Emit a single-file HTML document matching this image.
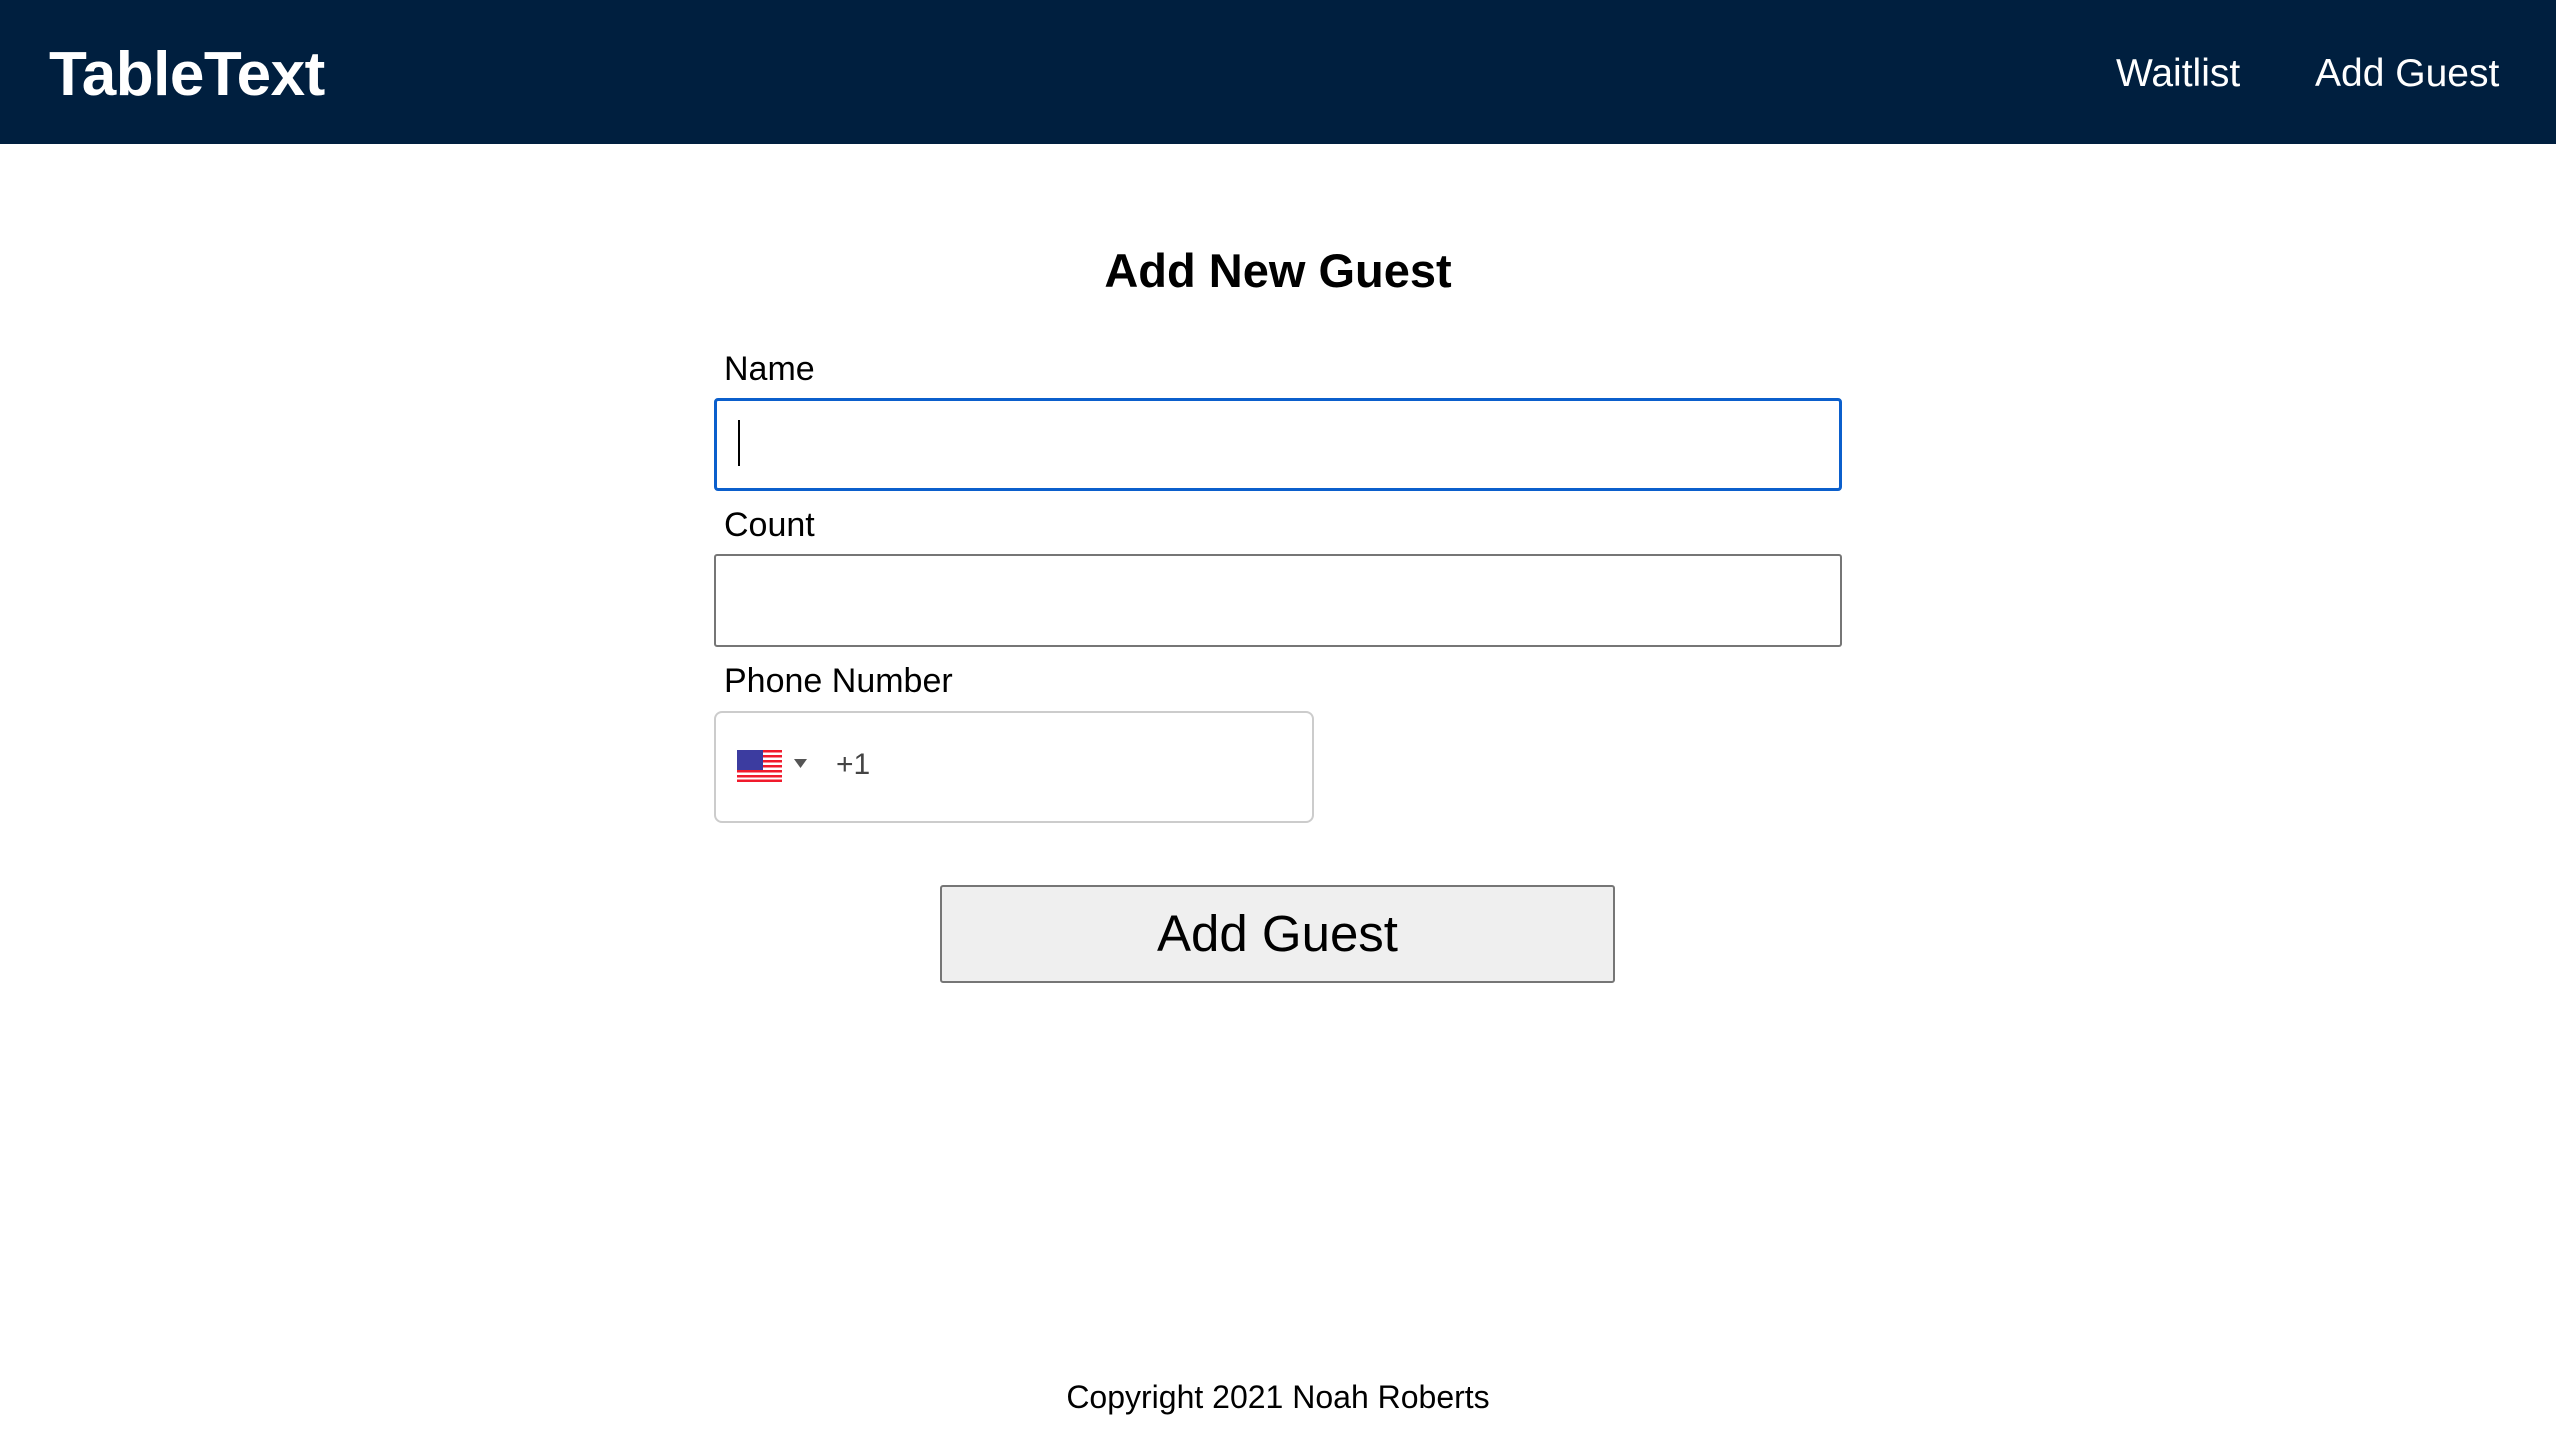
<!DOCTYPE html>
<html><head><meta charset="utf-8"><style>
*{margin:0;padding:0;box-sizing:border-box}
body{width:2556px;height:1438px;background:#fff;font-family:"Liberation Sans",sans-serif;position:relative;overflow:hidden;color:#000}
.hdr{position:absolute;left:0;top:0;width:2556px;height:144px;background:#001f3f}
.logo{position:absolute;left:49px;top:40px;font-size:62px;font-weight:bold;color:#fff;letter-spacing:-0.5px;line-height:70px}
.nav{position:absolute;top:52px;font-size:39px;color:#fff;line-height:44px}
.a{position:absolute;white-space:nowrap}
.lbl{position:absolute;left:724px;font-size:34px;line-height:40px}
.inp{position:absolute;left:714px;width:1128px;height:93px;border:2px solid #767676;border-radius:3px}
</style></head><body>
<div class="hdr">
<div class="logo">TableText</div>
<div class="nav" style="left:2116px">Waitlist</div>
<div class="nav" style="left:2315px">Add Guest</div>
</div>
<div class="a" style="left:0;width:2556px;text-align:center;top:243px;font-size:47px;font-weight:bold;line-height:56px">Add New Guest</div>
<div class="lbl" style="top:349px">Name</div>
<div class="inp" style="top:398px;border:3px solid #0b5fcc;border-radius:4px"></div>
<div class="a" style="left:738px;top:420px;width:2px;height:46px;background:#000"></div>
<div class="lbl" style="top:505px">Count</div>
<div class="inp" style="top:554px"></div>
<div class="lbl" style="top:661px">Phone Number</div>
<div class="a" style="left:714px;top:711px;width:600px;height:112px;border:2px solid #ccc;border-radius:8px"></div>
<svg class="a" style="left:737px;top:750px" width="45" height="32" viewBox="0 0 45 32">
<rect width="45" height="32" fill="#fff"/>
<g fill="#f01a2c"><rect y="0" width="45" height="2.5"/><rect y="5" width="45" height="2.5"/><rect y="10" width="45" height="2.5"/><rect y="15" width="45" height="2.5"/><rect y="20" width="45" height="2.5"/><rect y="25" width="45" height="2.5"/><rect y="29.5" width="45" height="2.5"/></g>
<rect width="26" height="20" fill="#3c3ca0"/></svg>
<svg class="a" style="left:794px;top:759px" width="13" height="9"><path d="M0 0H13L6.5 9Z" fill="#555"/></svg>
<div class="a" style="left:836px;top:747px;font-size:30px;color:#444;line-height:36px">+1</div>
<div class="a" style="left:940px;top:885px;width:675px;height:98px;background:#efefef;border:2px solid #767676;border-radius:3px;text-align:center;font-size:51px;line-height:94px">Add Guest</div>
<div class="a" style="left:0;width:2556px;text-align:center;top:1378px;font-size:32px;line-height:38px">Copyright 2021 Noah Roberts</div>
</body></html>
